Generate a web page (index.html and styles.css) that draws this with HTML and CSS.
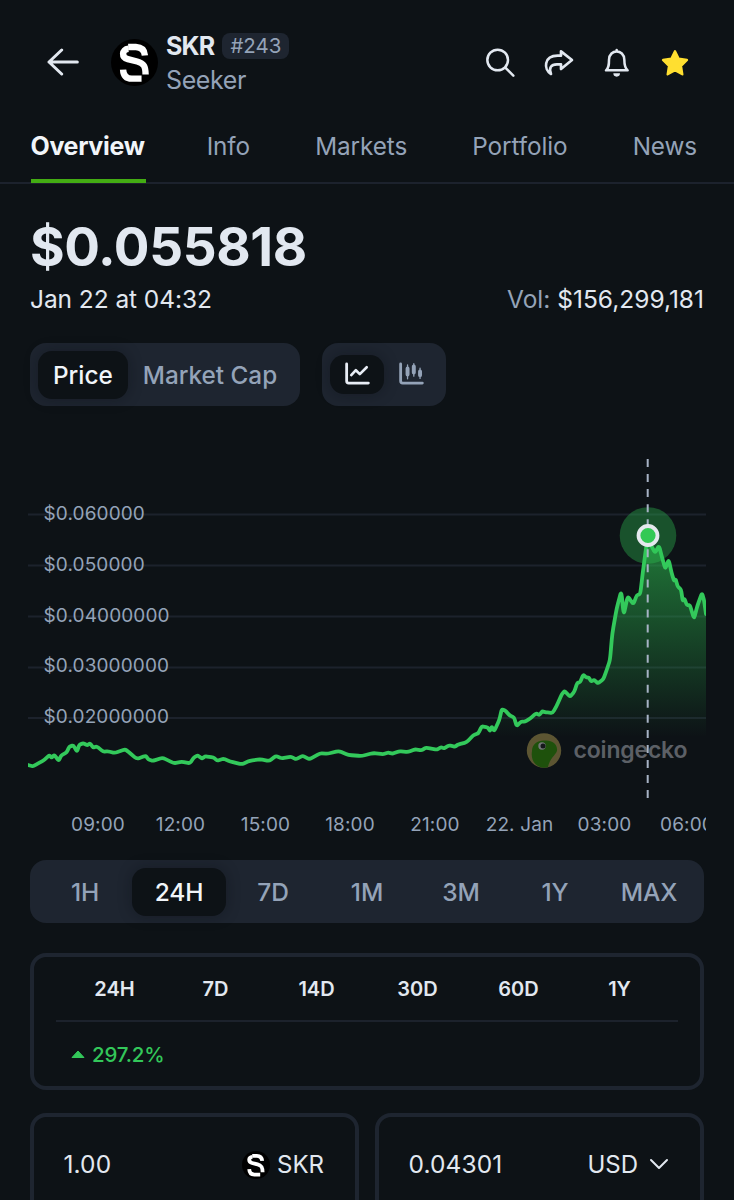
FILE: index.html
```html
<!DOCTYPE html>
<html lang="en">
<head>
<meta charset="utf-8">
<title>SKR – Seeker</title>
<link rel="stylesheet" href="styles.css">
</head>
<body>
<svg class="defs" width="0" height="0" aria-hidden="true">
  <symbol id="skr" viewBox="0 0 140 140">
    <circle cx="70" cy="70" r="70" fill="#000"/>
    <g fill="none" stroke="#fff" stroke-width="19">
      <path d="M51 24H74Q99 25 101 49"/>
      <path d="M52 29C31 31 31 55 50 60L78 67C98 72 103 82 103 106"/>
      <path d="M36 91C37 111 47 118 62 118H91"/>
    </g>
  </symbol>
</svg>
<header class="header">
  <svg class="back" viewBox="0 0 96 84" fill="none" stroke="#e2e8f0" stroke-width="9" stroke-linecap="round" stroke-linejoin="round"><path d="M91 42H6M44 6L6 42L44 78"/></svg>
  <svg class="logo"><use href="#skr"/></svg>
  <div class="coin">
    <div class="coin-top"><b class="symbol">SKR</b><span class="rank">#243</span></div>
    <div class="coin-name">Seeker</div>
  </div>
  <div class="actions">
    <svg viewBox="0 0 96 96" fill="none" stroke="#e2e8f0" stroke-width="7.5" stroke-linecap="round"><circle cx="41" cy="39" r="31"/><path d="M64 62L88 86"/></svg>
    <svg viewBox="0 0 96 96" fill="none" stroke="#e2e8f0" stroke-width="8" stroke-linejoin="round" stroke-linecap="round"><path d="M54 13L87 39L54 66V52H44C23 51 17 64 24 81C1 68 2 26 44 26H54Z"/></svg>
    <svg viewBox="0 0 96 96" fill="none" stroke="#e2e8f0" stroke-width="7.5" stroke-linejoin="round" stroke-linecap="round"><path d="M47 9V12M15 70H80C71 62 70 52 70 38C69 5 25 5 24 38C24 52 24 62 15 70Z"/><path d="M37 79H57A10 10 0 0 1 37 79Z" fill="#e2e8f0" stroke="none"/></svg>
    <svg viewBox="0 0 96 96" fill="#ffdf30" stroke="#ffdf30" stroke-width="7" stroke-linejoin="round"><path d="M48 13L59 35L84 39L66 57L70 82L48 70L26 82L30 57L12 39L37 35Z"/></svg>
  </div>
</header>
<nav class="tabs">
  <a class="tab tab-active">Overview</a><a class="tab">Info</a><a class="tab">Markets</a><a class="tab">Portfolio</a><a class="tab">News</a>
</nav>
<main class="main">
  <div class="price">$0.055818</div>
  <div class="meta"><span class="date">Jan 22 at 04:32</span><span class="vol"><span class="muted">Vol:</span> $156,299,181</span></div>
  <div class="toggles">
    <div class="segment"><span class="seg-item seg-on">Price</span><span class="seg-item">Market Cap</span></div>
    <div class="segment">
      <span class="seg-icon seg-on"><svg viewBox="0 0 76 68" fill="none" stroke="#e8edf5" stroke-width="8.5" stroke-linecap="round" stroke-linejoin="round"><path d="M5 5V57Q5 63 11 63H71"/><path d="M19 39L33 24L45 36L66 15" stroke-width="8"/></svg></span>
      <span class="seg-icon"><svg viewBox="0 0 76 68" fill="none" stroke="#94a3b8" stroke-width="8.5" stroke-linecap="round" stroke-linejoin="round"><path d="M5 5V57Q5 63 11 63H71"/><path d="M26 8V50M45 4V42M64 18V49" stroke-width="4"/><path d="M26 19V37M45 13V31M64 28V39" stroke-width="12"/></svg></span>
    </div>
  </div>
</main>
<svg class="chart" viewBox="0 430 734 418" width="734" height="418">
  <defs>
    <linearGradient id="area" gradientUnits="userSpaceOnUse" x1="0" y1="535" x2="0" y2="737"><stop offset="0" stop-color="#2fc653" stop-opacity=".58"/><stop offset="1" stop-color="#2fc653" stop-opacity="0"/></linearGradient>
    <clipPath id="plot"><rect x="28" y="430" width="678" height="418"/></clipPath>
  </defs>
  <g class="grid"><path d="M28 514.5H706M28 565.5H706M28 616.5H706M28 667.5H706M28 718H706"/></g>
  <g clip-path="url(#plot)">
    <path id="fill" fill="url(#area)"/>
    <path id="line" class="line"/>
  </g>
  <g class="axis">
    <text x="43.5" y="519.5">$0.060000</text><text x="43.5" y="570.5">$0.050000</text><text x="43.5" y="621.5">$0.04000000</text><text x="43.5" y="672.3">$0.03000000</text><text x="43.5" y="723">$0.02000000</text>
  </g>
  <g opacity=".42">
    <circle cx="544" cy="750.5" r="17.2" fill="#c9b25a"/>
    <path d="M548 767C538 770 530 762 532 751C532 744 538 740 545 740.5C552 740 557 744 557 749C558 754 550 757 548 767Z" fill="#36a800"/>
    <circle cx="542" cy="746" r="3.7" fill="#fff"/><circle cx="543" cy="746" r="2.5" fill="#222"/>
  </g>
  <text class="brand" x="573.5" y="757.5" textLength="114">coingecko</text>
  <circle cx="648" cy="535.5" r="28.3" fill="#2fc653" fill-opacity=".36"/>
  <path d="M647.7 459V799" stroke="#a7b3c5" stroke-width="2" stroke-dasharray="8 7.05"/>
  <circle cx="648" cy="535.5" r="9.5" fill="#33c955" stroke="#e5e9ee" stroke-width="3.8"/>
  <g class="axis times" clip-path="url(#plot)">
    <text x="98" y="831">09:00</text><text x="180.5" y="831">12:00</text><text x="265.5" y="831">15:00</text><text x="350" y="831">18:00</text><text x="435" y="831">21:00</text><text x="519.5" y="831">22. Jan</text><text x="604.5" y="831">03:00</text><text x="687" y="831">06:00</text>
  </g>
</svg>
<section class="lower">
  <div class="ranges"><span>1H</span><span class="seg-on">24H</span><span>7D</span><span>1M</span><span>3M</span><span>1Y</span><span>MAX</span></div>
  <div class="changes">
    <div class="changes-head"><b>24H</b><b>7D</b><b>14D</b><b>30D</b><b>60D</b><b>1Y</b></div>
    <div class="changes-row"><svg viewBox="0 0 14 9" width="14" height="9"><path d="M7 1L13 7.5H1Z" fill="#33c75a" stroke="#33c75a" stroke-linejoin="round"/></svg>297.2%</div>
  </div>
  <div class="converter">
    <div class="field"><span class="amount">1.00</span><span class="unit"><svg class="logo-small"><use href="#skr"/></svg>SKR</span></div>
    <div class="field"><span class="amount">0.04301</span><span class="unit">USD<svg class="chevron" viewBox="0 0 20 12"><path d="M2 2L10 10L18 2" fill="none" stroke="#e2e8f0" stroke-width="2" stroke-linecap="round" stroke-linejoin="round"/></svg></span></div>
  </div>
</section>
<script src="chart.js"></script>
</body>
</html>
```
FILE: styles.css
```css
* { box-sizing: border-box; }
body { margin: 0; width: 734px; height: 1200px; overflow: hidden; background: #0d1216; color: #e2e8f0; font-family: Inter, "Liberation Sans", sans-serif; font-size: 24.5px; }
.defs { display: block; }
.header { height: 126px; padding: 31px 43px 0 47px; display: flex; align-items: flex-start; }
.back { width: 32px; height: 28px; margin-top: 17px; }
.logo { width: 47px; height: 47px; margin: 8px 8px 0 32px; }
.coin-top { display: flex; align-items: center; height: 30px; gap: 8px; }
.symbol { font-size: 25px; font-weight: 700; letter-spacing: -.8px; }
.rank { height: 26px; padding: 0 8px; border-radius: 8px; background: #1e2530; color: #94a3b8; font-size: 20.5px; line-height: 26px; }
.coin-name { height: 36px; line-height: 38px; color: #94a3b8; font-size: 25px; letter-spacing: -.4px; }
.actions { display: flex; gap: 26.2px; margin: 16px 0 0 auto; }
.actions svg { width: 32px; height: 32px; }
.tabs { height: 58px; padding: 0 37px 0 30.5px; display: flex; justify-content: space-between; border-bottom: 2px solid #1c222d; }
.tab { line-height: 40px; height: 57px; color: #94a3b8; font-size: 24.3px; letter-spacing: -.1px; }
.tab-active { width: 115px; margin-right: -4px; color: #f1f5f9; font-size: 25px; font-weight: 700; letter-spacing: -.35px; border-bottom: 4px solid #43ac13; }
.main { padding: 30px 30px 0; height: 246px; }
.price { height: 66px; line-height: 66px; font-size: 53px; font-weight: 700; letter-spacing: -.4px; }
.meta { display: flex; justify-content: space-between; line-height: 38px; height: 38px; }
.date { letter-spacing: -.07px; }
.muted { color: #94a3b8; }
.toggles { display: flex; gap: 22px; margin-top: 25px; }
.segment { height: 63px; padding: 8px; display: flex; align-items: center; background: #1e2530; border-radius: 16px; font-weight: 500; font-size: 24.3px; }
.seg-item { height: 48px; line-height: 48px; padding: 0 15px; border-radius: 14px; color: #94a3b8; }
.seg-on.seg-on { background: #0d1216; color: #f1f5f9; box-shadow: 0 0 14px rgba(8, 12, 16, .35); }
.seg-icon { width: 54px; height: 39px; display: flex; align-items: center; justify-content: center; border-radius: 14px; }
.seg-icon svg { width: 25px; height: 23px; margin-bottom: 2px; }
.chart { display: block; }
.grid { stroke: #1c222c; stroke-width: 2; fill: none; }
.line { fill: none; stroke: #33c95b; stroke-width: 3.8px; stroke-linejoin: round; stroke-linecap: round; }
.axis { fill: #94a3b8; font-size: 19px; letter-spacing: .12px; }
.times { text-anchor: middle; }
.brand { fill: #5c6066; font-size: 23px; font-weight: 600; }
.lower { padding: 12px 30px 0; }
.ranges { height: 63px; padding: 8px; display: grid; grid-template-columns: repeat(7, 1fr); background: #1e2530; border-radius: 16px; font-size: 24.5px; font-weight: 500; letter-spacing: -.1px; color: #94a3b8; text-align: center; line-height: 49px; }
.ranges span { height: 48px; border-radius: 14px; }
.changes { height: 137px; margin-top: 30px; padding: 0 22px; border: 4px solid #1e2530; border-radius: 16px; }
.changes-head { display: grid; grid-template-columns: repeat(6, 101px); padding-left: 8px; height: 65px; line-height: 65px; border-bottom: 2px solid #1c222c; text-align: center; font-size: 20px; font-weight: 600; }
.changes-head b { font-weight: 600; }
.changes-row { display: flex; align-items: center; gap: 7px; height: 65px; padding-left: 15px; color: #33c75a; font-size: 20.5px; font-weight: 500; letter-spacing: -.2px; }
.converter { display: grid; grid-template-columns: 329px 329px; gap: 16px; margin-top: 23px; }
.field { height: 110px; padding: 0 31px 0 29.5px; display: flex; align-items: flex-start; justify-content: space-between; line-height: 94px; font-size: 24px; border: 4px solid #1e2530; border-radius: 16px; }
.amount { font-size: 24.5px; letter-spacing: .1px; }
.unit { display: flex; align-items: center; margin-top: 1px; }
.logo-small { width: 28px; height: 28px; margin-right: 7px; }
.chevron { width: 20px; height: 12px; margin-left: 11px; margin-bottom: 3px; }
```
FILE: chart.js
```js
const points = [
  [28,765],[33,766.3],[37.7,763.7],[43.3,760.7],[49.3,755.3],[51.7,757.7],[54.3,755],[58.7,760.7],[61.3,755.3],[66.7,752.3],
  [69.3,746.7],[73.3,745.3],[77,751.7],[79.3,744.7],[83.3,743.3],[87.3,745.3],[90,743.3],[93.3,747.7],[96.7,746.3],[103.3,751.7],
  [108,751.3],[115,753],[125,749.3],[128.3,751.7],[136.7,759],[145.7,755.7],[148.3,759.3],[152.7,761],[162.7,757.7],[174,763.3],
  [181.7,761.7],[190,763.3],[194,757.3],[197.7,755.3],[202,758.7],[205,756.3],[213.3,757.3],[217.3,760.7],[223.3,758.7],[230,761.3],
  [241.7,764.3],[250,760.7],[260,759.3],[269.3,761],[275.7,756],[281.7,758.3],[291,756.7],[296,759.3],[302.7,755.7],[309.3,759.3],
  [320,753.3],[327.7,753.7],[339,751],[348.3,755],[361.7,756],[373.3,753],[383.3,754.3],[388,752.5],[392.7,753.7],[398.7,751.3],
  [408.3,752],[415,749.3],[421.7,750.3],[425.7,747.7],[436.7,749.7],[441,747.3],[444,748.3],[449,745.3],[455,746.7],[458.3,744.3],
  [466.7,742.3],[473.3,735.3],[478.3,733.3],[481.7,726.3],[487.7,727.3],[490,731],[491.7,726.7],[494.3,731],[499.3,720],[501.7,709.5],
  [505,710.3],[510,715.7],[514,717.3],[516.7,726],[521,721.7],[525,721.7],[530,718.7],[536,713.3],[539.3,715],[542.3,711.3],
  [546,712.3],[552.7,713],[557.7,703.7],[561.7,694.3],[564.7,691],[570,696.7],[574.3,691.7],[577.3,682.7],[580,682.3],[583.3,674.7],
  [586,677.3],[589,677.7],[591,681.3],[594.3,680],[598,683.3],[603.3,679.3],[606.7,670],[610,660],[612.3,633.3],[616.7,608.3],
  [621.3,591],[623.7,615],[627.7,596],[633.3,604.3],[636.7,595.3],[640.3,594],[642.7,573.3],[646,548.3],[648,536],[651.7,546.7],
  [655,552.7],[659,545.7],[662.3,558.3],[665.3,569],[668.7,559.7],[671.7,573.3],[674,580.7],[675.7,579.3],[677.7,586.7],[681,589.3],
  [682.7,600.7],[684.7,599],[686.7,605],[690,605.3],[694,619],[697.3,606],[702,593],[704,600],[706,614]
];

// Round each corner a little by easing toward the neighbouring points.
let d = "M" + points[0];
for (let i = 1; i < points.length - 1; i++) {
  const [px, py] = points[i - 1], [x, y] = points[i], [nx, ny] = points[i + 1];
  const a = [x + (px - x) * 0.25, y + (py - y) * 0.25];
  const b = [x + (nx - x) * 0.25, y + (ny - y) * 0.25];
  d += "L" + a + "Q" + [x, y] + " " + b;
}
d += "L" + points[points.length - 1];
document.getElementById("line").setAttribute("d", d);
document.getElementById("fill").setAttribute("d", d + "V770H28Z");
```
